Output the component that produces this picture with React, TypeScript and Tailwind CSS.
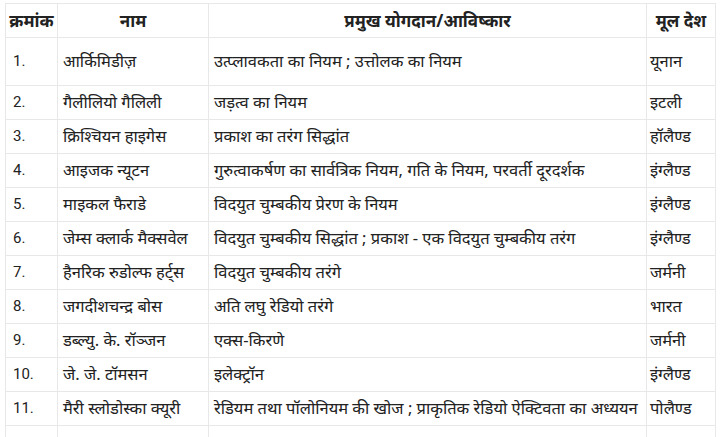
const rows = [
  ["1.", "आर्किमिडीज़", "उत्प्लावकता का नियम ; उत्तोलक का नियम", "यूनान"],
  ["2.", "गैलीलियो गैलिली", "जड़त्व का नियम", "इटली"],
  ["3.", "क्रिश्चियन हाइगेस", "प्रकाश का तरंग सिद्धांत", "हॉलैण्ड"],
  ["4.", "आइजक न्यूटन", "गुरुत्वाकर्षण का सार्वत्रिक नियम, गति के नियम, परवर्ती दूरदर्शक", "इंग्लैण्ड"],
  ["5.", "माइकल फैराडे", "विदयुत चुम्बकीय प्रेरण के नियम", "इंग्लैण्ड"],
  ["6.", "जेम्स क्लार्क मैक्सवेल", "विदयुत चुम्बकीय सिद्धांत ; प्रकाश - एक विदयुत चुम्बकीय तरंग", "इंग्लैण्ड"],
  ["7.", "हैनरिक रुडोल्फ हर्ट्स", "विदयुत चुम्बकीय तरंगे", "जर्मनी"],
  ["8.", "जगदीशचन्द्र बोस", "अति लघु रेडियो तरंगे", "भारत"],
  ["9.", "डब्ल्यु. के. रॉञ्जन", "एक्स-किरणे", "जर्मनी"],
  ["10.", "जे. जे. टॉमसन", "इलेक्ट्रॉन", "इंग्लैण्ड"],
  ["11.", "मैरी स्लोडोस्का क्यूरी", "रेडियम तथा पॉलोनियम की खोज ; प्राकृतिक रेडियो ऐक्टिवता का अध्ययन", "पोलैण्ड"],
];

export default function App() {
  return (
    <div className="w-[723px] h-[437px] overflow-hidden bg-white pt-[3px] pl-[5px] text-[#222] font-['Noto_Sans','Open_Sans',sans-serif]">
      <table className="border-collapse table-fixed w-[710px] text-[16.5px] leading-tight">
        <colgroup>
          <col className="w-[52px]" />
          <col className="w-[151px]" />
          <col className="w-[438px]" />
          <col className="w-[69px]" />
        </colgroup>
        <thead>
          <tr className="h-[34px] font-bold text-[17px]">
            <th className="border border-[#e8e8e8] px-[2px] text-center whitespace-nowrap">क्रमांक</th>
            <th className="border border-[#e8e8e8] px-[5px] text-center">नाम</th>
            <th className="border border-[#e8e8e8] px-[5px] text-center">प्रमुख योगदान/आविष्कार</th>
            <th className="border border-[#e8e8e8] px-[2px] text-center whitespace-nowrap">मूल देश</th>
          </tr>
        </thead>
        <tbody>
          {rows.map((r, i) => (
            <tr key={i} className={i === 0 ? "h-[48px]" : "h-[34px]"}>
              <td className="border border-[#e8e8e8] pl-[7px] pr-[4px] text-[15px] font-['Roboto',sans-serif]">{r[0]}</td>
              <td className="border border-[#e8e8e8] px-[5px] whitespace-nowrap">{r[1]}</td>
              <td className="border border-[#e8e8e8] px-[5px] whitespace-nowrap">{r[2]}</td>
              <td className="border border-[#e8e8e8] px-[3px] whitespace-nowrap">{r[3]}</td>
            </tr>
          ))}
          <tr className="h-[34px]">
            <td className="border border-[#e8e8e8]"></td>
            <td className="border border-[#e8e8e8]"></td>
            <td className="border border-[#e8e8e8]"></td>
            <td className="border border-[#e8e8e8]"></td>
          </tr>
        </tbody>
      </table>
    </div>
  );
}
